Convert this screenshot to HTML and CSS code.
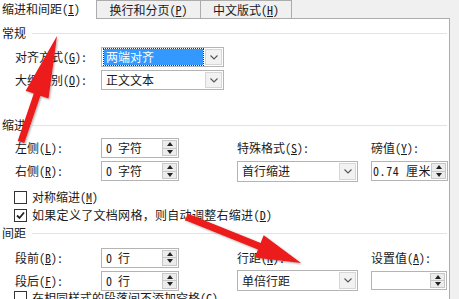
FILE: index.html
```html
<!DOCTYPE html>
<html lang="zh-CN">
<head>
<meta charset="utf-8">
<title>段落</title>
<link rel="stylesheet" href="styles.css">
</head>
<body>
<div class="page">
  <div class="tabs">
    <div class="tab tab-active">缩进和间距(<u>I</u>)</div>
    <div class="tab tab-2">换行和分页(<u>P</u>)</div>
    <div class="tab tab-3">中文版式(<u>H</u>)</div>
  </div>
  <div class="panel">
    <div class="group-title g1"><span>常规</span></div>
    <div class="form-row row-a">
      <span class="label">对齐方式(<u>G</u>)<span class="colon">：</span></span>
      <div class="select sel-wide">
        <span class="val"><span class="hl">两端对齐</span></span>
        <span class="drop"><svg width="8" height="5" viewBox="0 0 8 5"><path d="M0.5 0.5 L4 4 L7.5 0.5" fill="none" stroke="#555" stroke-width="1.1"/></svg></span>
      </div>
    </div>
    <div class="form-row row-b">
      <span class="label">大纲级别(<u>O</u>)<span class="colon">：</span></span>
      <div class="select sel-wide">
        <span class="val">正文文本</span>
        <span class="drop"><svg width="8" height="5" viewBox="0 0 8 5"><path d="M0.5 0.5 L4 4 L7.5 0.5" fill="none" stroke="#555" stroke-width="1.1"/></svg></span>
      </div>
    </div>

    <div class="group-title g2"><span>缩进</span></div>
    <div class="grid grid-indent">
      <span class="label">左侧(<u>L</u>)<span class="colon">：</span></span>
      <div class="spin spin-l"><span class="val">0 字符</span><span class="btns"><span class="up"></span><span class="dn"></span></span></div>
      <span class="label">特殊格式(<u>S</u>)<span class="colon">：</span></span>
      <span class="label">磅值(<u>Y</u>)<span class="colon">：</span></span>

      <span class="label">右侧(<u>R</u>)<span class="colon">：</span></span>
      <div class="spin spin-l"><span class="val">0 字符</span><span class="btns"><span class="up"></span><span class="dn"></span></span></div>
      <div class="select sel-mid">
        <span class="val">首行缩进</span>
        <span class="drop"><svg width="8" height="5" viewBox="0 0 8 5"><path d="M0.5 0.5 L4 4 L7.5 0.5" fill="none" stroke="#555" stroke-width="1.1"/></svg></span>
      </div>
      <div class="spin spin-r"><span class="val val-tight">0.74 厘米</span><span class="btns"><span class="up"></span><span class="dn"></span></span></div>
    </div>

    <div class="checks">
      <label class="check-row"><span class="box"></span><span>对称缩进(<u>M</u>)</span></label>
      <label class="check-row"><span class="box checked"><svg width="11" height="11" viewBox="0 0 11 11"><path d="M2 5.5 L4.5 8 L9 2.5" fill="none" stroke="#222" stroke-width="1.8"/></svg></span><span class="long">如果定义了文档网格<span class="full">，</span>则自动调整右缩进(<u>D</u>)</span></label>
    </div>

    <div class="group-title g3"><span>间距</span></div>
    <div class="grid grid-space">
      <span class="label">段前(<u>B</u>)<span class="colon">：</span></span>
      <div class="spin spin-l"><span class="val">0 行</span><span class="btns"><span class="up"></span><span class="dn"></span></span></div>
      <span class="label">行距(<u>N</u>)<span class="colon">：</span></span>
      <span class="label">设置值(<u>A</u>)<span class="colon">：</span></span>

      <span class="label">段后(<u>F</u>)<span class="colon">：</span></span>
      <div class="spin spin-l"><span class="val">0 行</span><span class="btns"><span class="up"></span><span class="dn"></span></span></div>
      <div class="select sel-mid">
        <span class="val">单倍行距</span>
        <span class="drop"><svg width="8" height="5" viewBox="0 0 8 5"><path d="M0.5 0.5 L4 4 L7.5 0.5" fill="none" stroke="#555" stroke-width="1.1"/></svg></span>
      </div>
      <div class="spin spin-r2"><span class="val"></span><span class="btns"><span class="up"></span><span class="dn"></span></span></div>
    </div>
    <label class="check-row last"><span class="box"></span><span>在相同样式的段落间不添加空格(<u>C</u>)</span></label>
  </div>

  <svg class="arrows" width="459" height="299" viewBox="0 0 459 299">
    <defs>
      <filter id="sh" x="-20%" y="-20%" width="140%" height="140%">
        <feDropShadow dx="1" dy="1" stdDeviation="1.2" flood-color="#000" flood-opacity="0.35"/>
      </filter>
    </defs>
    <polygon filter="url(#sh)" fill="#ec1a1a" points="17.7,140.9 33.8,93.6 25.7,90.8 57,36 48.5,98.6 40.4,95.8 24.3,143.1"/>
    <polygon filter="url(#sh)" fill="#ec1a1a" points="185.3,220.3 258.0,249.5 254.7,257.4 301,263 263.7,235.2 260.6,243.0 187.9,213.7"/>
  </svg>
</div>
</body>
</html>
```

FILE: styles.css
```css
* { box-sizing: border-box; margin: 0; padding: 0; }

html, body { background: #f0f0f0; }

body {
  width: 459px;
  height: 299px;
  overflow: hidden;
  font-family: "Noto Sans CJK SC", "Microsoft YaHei", sans-serif;
  font-size: 12px;
  font-feature-settings: "hwid" 1;
  color: #1a1a1a;
}

u { text-decoration: underline; text-underline-offset: 1px; }

.colon { font-family: "Noto Sans CJK JP", "Noto Sans CJK SC", sans-serif; }
.full { font-feature-settings: normal; }
.long { letter-spacing: 0.3px; }

.page {
  position: relative;
  width: 459px;
  height: 299px;
  overflow: hidden;
}

/* tabs */
.tabs {
  display: flex;
  height: 19px;
  position: relative;
  z-index: 1;
}
.tab {
  height: 19px;
  line-height: 18px;
  white-space: nowrap;
}
.tab-active {
  width: 96px;
  background: #fff;
  padding-left: 2px;
  line-height: 17px;
}
.tab-2, .tab-3 {
  background: #f0f0f0;
  border: 1px solid #acacac;
  text-align: center;
  line-height: 18px;
}
.tab-2 { width: 105px; }
.tab-3 { width: 91px; border-left: none; }

/* panel */
.panel {
  width: 450px;
  height: 281px;
  margin-top: -1px;
  background: #fff;
  border-top: 1px solid #acacac;
  border-right: 1px solid #acacac;
  padding-left: 2px;
  display: flex;
  flex-direction: column;
}

.group-title {
  display: flex;
  align-items: center;
  height: 14px;
  line-height: 14px;
  padding-right: 2px;
}
.group-title::after {
  content: "";
  flex: 1;
  height: 1px;
  background: #e3e3e3;
  margin-left: 6px;
}
.g1 { margin-top: 7px; }
.g2 { margin-top: 28px; }
.g3 { margin-top: 2px; }

.form-row {
  display: flex;
  align-items: center;
  height: 20px;
  padding-left: 13px;
}
.row-a { margin-top: 7px; }
.row-b { margin-top: 3px; }

.label {
  white-space: nowrap;
  line-height: 14px;
}
.form-row .label { width: 86px; }

/* select */
.select {
  display: flex;
  height: 20px;
  border: 1px solid #b4b4b4;
  background: #fff;
}
.sel-wide { width: 123px; }
.sel-mid { width: 121px; height: 21px; }
.select .val {
  flex: 1;
  display: flex;
  align-items: center;
  padding-left: 4px;
  white-space: nowrap;
  line-height: 14px;
}
.select .val .hl {
  display: block;
  flex: 1;
  margin: 1px 1px 1px -2px;
  padding: 1px 0 1px 2px;
  background: #3399ff;
  color: #fff;
  outline: 1px dotted #333;
}
.drop {
  width: 17px;
  margin: 1px;
  border: 1px solid #d6d6d6;
  background: #f2f2f2;
  display: flex;
  align-items: center;
  justify-content: center;
}

/* spinners */
.spin {
  display: flex;
  height: 20px;
  border: 1px solid #b4b4b4;
  background: #fff;
}
.spin-l { width: 78px; }
.spin-r { width: 77px; }
.spin-r2 { width: 76px; height: 19px; }
.spin .val {
  flex: 1;
  display: flex;
  align-items: center;
  padding-left: 4px;
  white-space: pre;
  line-height: 14px;
}
.spin .val-tight { padding-left: 1px; letter-spacing: 0.6px; }
.btns {
  width: 15px;
  margin: 1px 1px 1px 0;
  border: 1px solid #c8c8c8;
  background: #ececec;
  display: flex;
  flex-direction: column;
}
.btns .up, .btns .dn {
  flex: 1;
  display: flex;
  align-items: center;
  justify-content: center;
}
.btns .dn { border-top: 1px solid #c8c8c8; }
.btns .up::before {
  content: "";
  border-left: 3.5px solid transparent;
  border-right: 3.5px solid transparent;
  border-bottom: 4px solid #222;
}
.btns .dn::before {
  content: "";
  border-left: 3.5px solid transparent;
  border-right: 3.5px solid transparent;
  border-top: 4px solid #222;
}

/* grids */
.grid {
  display: grid;
  grid-template-columns: 86px 136px 134px 77px;
  grid-template-rows: 20px 20px;
  row-gap: 3px;
  align-items: center;
  padding-left: 13px;
}
.grid-indent { margin-top: 6px; }
.grid-space { margin-top: 8px; grid-template-rows: 19px 19px; row-gap: 4px; }

/* checkboxes */
.checks { margin-top: 7px; display: flex; flex-direction: column; }
.check-row {
  display: flex;
  align-items: center;
  gap: 5px;
  height: 18px;
  padding-left: 12px;
  white-space: nowrap;
  line-height: 14px;
}
.check-row.last { align-items: flex-start; padding-top: 1px; }
.box {
  width: 13px;
  height: 13px;
  border: 1px solid #333;
  background: #fff;
  display: flex;
  align-items: center;
  justify-content: center;
  flex: none;
}

/* annotation arrows */
.arrows {
  position: absolute;
  left: 0;
  top: 0;
  z-index: 5;
  pointer-events: none;
}
```
